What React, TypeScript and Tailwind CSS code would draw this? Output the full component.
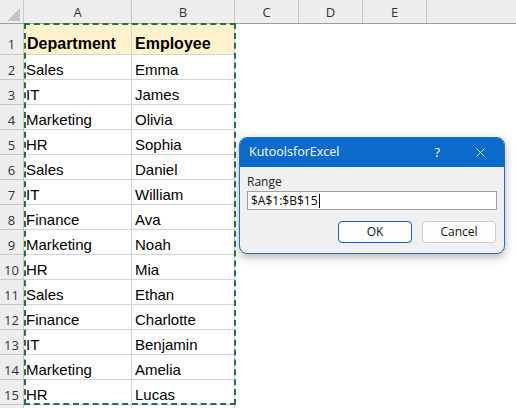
import { X } from "lucide-react";

const rows: [string, string][] = [
  ["Sales", "Emma"],
  ["IT", "James"],
  ["Marketing", "Olivia"],
  ["HR", "Sophia"],
  ["Sales", "Daniel"],
  ["IT", "William"],
  ["Finance", "Ava"],
  ["Marketing", "Noah"],
  ["HR", "Mia"],
  ["Sales", "Ethan"],
  ["Finance", "Charlotte"],
  ["IT", "Benjamin"],
  ["Marketing", "Amelia"],
  ["HR", "Lucas"],
];

const cols = ["C", "D", "E"];

export default function App() {
  return (
    <div className="relative h-[408px] w-[516px] overflow-hidden bg-white font-['Liberation_Sans',Arial,sans-serif] text-black">
      {/* column header */}
      <div className="flex h-[24px] border-b border-[#9e9e9e] bg-[#eeeeee] text-[13px] text-[#333] font-['Open_Sans',sans-serif]">
        <div className="relative w-[24px] shrink-0 border-r border-[#c8c8c8]">
          <div className="absolute bottom-[2px] right-[3px] h-0 w-0 border-b-[13px] border-l-[13px] border-b-[#c5c5c5] border-l-transparent" />
        </div>
        <div className="flex w-[108px] shrink-0 items-end justify-center border-r border-[#c8c8c8] pb-[1px]">A</div>
        <div className="flex w-[103px] shrink-0 items-end justify-center border-r border-[#c8c8c8] pb-[1px]">B</div>
        {cols.map((c) => (
          <div key={c} className="flex w-[64px] shrink-0 items-end justify-center border-r border-[#c8c8c8] pb-[1px]">
            {c}
          </div>
        ))}
      </div>

      {/* row 1 */}
      <div className="flex h-[31px]">
        <div className="flex w-[24px] shrink-0 items-end justify-center border-r border-b border-[#c8c8c8] bg-[#eeeeee] pb-[1px] text-[13px] leading-[18px] text-[#333] font-['Open_Sans',sans-serif]">
          1
        </div>
        <div className="flex w-[108px] shrink-0 items-end border-r border-b border-[#d4d4d4] bg-[#fff2cc] pb-[1px] pl-[3px] text-[16px] leading-[18px] font-bold">
          Department
        </div>
        <div className="flex w-[103px] shrink-0 items-end border-r border-b border-[#d4d4d4] bg-[#fff2cc] pb-[1px] pl-[3px] text-[16px] leading-[18px] font-bold">
          Employee
        </div>
      </div>

      {rows.map(([dept, name], i) => (
        <div key={i} className="flex h-[25px]">
          <div className="flex w-[24px] shrink-0 items-end justify-center border-r border-b border-[#c8c8c8] bg-[#eeeeee] pb-[1px] text-[13px] leading-[16px] text-[#333] font-['Open_Sans',sans-serif]">
            {i + 2}
          </div>
          <div className="flex w-[108px] shrink-0 items-end border-r border-b border-[#d4d4d4] pb-[1px] pl-[2px] text-[15px] leading-[16px]">
            {dept}
          </div>
          <div className="flex w-[103px] shrink-0 items-end border-r border-b border-[#d4d4d4] pb-[1px] pl-[3px] text-[15px] leading-[16px]">
            {name}
          </div>
        </div>
      ))}
      <div className="flex h-[10px]">
        <div className="w-[24px] shrink-0 border-r border-[#c8c8c8] bg-[#eeeeee]" />
        <div className="w-[108px] shrink-0 border-r border-[#d4d4d4]" />
        <div className="w-[103px] shrink-0 border-r border-[#d4d4d4]" />
      </div>

      {/* copy marquee */}
      <div className="pointer-events-none absolute left-[24px] top-[23px] h-[382px] w-[212px] border-2 border-dashed border-[#217346]" />

      {/* dialog */}
      <div className="absolute left-[239px] top-[137px] w-[266px] overflow-hidden rounded-[8px] border border-[#1a6fc4] bg-[#f0f0f0] shadow-[0_3px_10px_rgba(0,0,0,0.3)] font-['Open_Sans',sans-serif]">
        <div className="flex h-[29px] items-center bg-[#0b6bcb] pl-[9px] text-[12.5px] text-white">
          <span className="flex-1">KutoolsforExcel</span>
          <span className="mr-[33px] text-[13px]">?</span>
          <X className="mr-[16px] h-[15px] w-[15px]" strokeWidth={1.3} />
        </div>
        <div className="px-[7px] pt-[7px] pb-[10px]">
          <div className="text-[12px] leading-[16px] text-[#222]">Range</div>
          <div className="mt-[1px] flex h-[19px] items-center border border-[#a0a0a0] bg-white pl-[3px] text-[12px] text-black">
            $A$1:$B$15<span className="ml-[1px] inline-block h-[14px] w-px bg-black" />
          </div>
          <div className="mt-[11px] flex justify-end gap-[10px] pr-[1px]">
            <button className="h-[22px] w-[74px] rounded-[4px] border border-[#1a5fa8] bg-[#fdfdfd] text-[12px] text-[#111]">
              OK
            </button>
            <button className="h-[22px] w-[74px] rounded-[4px] border border-[#cfcfcf] bg-[#fdfdfd] text-[12px] text-[#111]">
              Cancel
            </button>
          </div>
        </div>
      </div>
    </div>
  );
}
